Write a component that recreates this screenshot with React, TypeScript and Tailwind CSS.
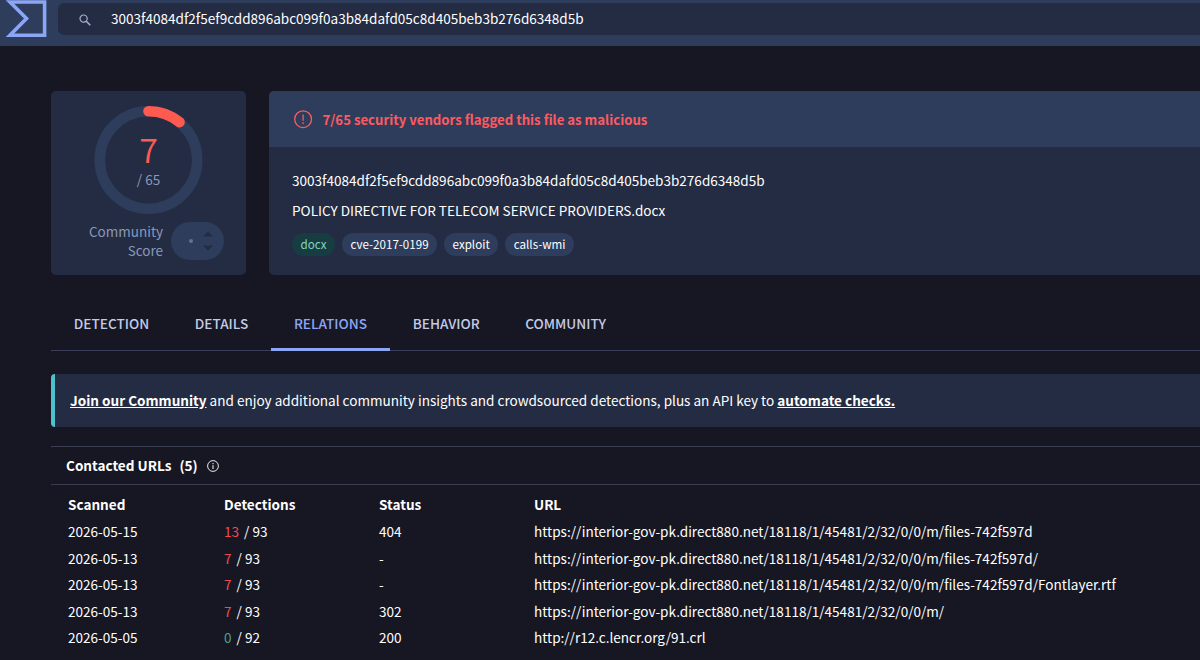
import { useState } from "react";

const FILE_HASH =
  "3003f4084df2f5ef9cdd896abc099f0a3b84dafd05c8d405beb3b276d6348d5b";

const TABS = ["DETECTION", "DETAILS", "RELATIONS", "BEHAVIOR", "COMMUNITY"];

const BASE_URL = "https://interior-gov-pk.direct880.net/18118/1/45481/2/32/0/0/m/";

const CONTACTED_URLS = [
  { scanned: "2026-05-15", hits: 13, total: 93, status: "404", url: `${BASE_URL}files-742f597d` },
  { scanned: "2026-05-13", hits: 7, total: 93, status: "-", url: `${BASE_URL}files-742f597d/` },
  { scanned: "2026-05-13", hits: 7, total: 93, status: "-", url: `${BASE_URL}files-742f597d/Fontlayer.rtf` },
  { scanned: "2026-05-13", hits: 7, total: 93, status: "302", url: BASE_URL },
  { scanned: "2026-05-05", hits: 0, total: 92, status: "200", url: "http://r12.c.lencr.org/91.crl" },
];

function TopBar() {
  return (
    <header className="flex h-[46px] bg-[#2e3d5c]">
      <svg className="ml-[5px] h-[38px] w-[42px] shrink-0" viewBox="0 0 42 38" fill="none">
        <path d="M5 2H39.6V35.2H5L21.5 18.6Z" stroke="#8ca6f5" strokeWidth="3.6" />
      </svg>
      <div className="ml-[11px] mt-[3px] flex h-8 flex-1 items-center rounded-l-md bg-[#242c43] pl-[21px]">
        <svg className="mt-px h-3 w-3 shrink-0" viewBox="0 0 12 12" fill="none" stroke="#a9b3cc" strokeWidth="1.2">
          <circle cx="4.6" cy="4.6" r="3.6" />
          <path d="M7.3 7.3L11.3 11.3" strokeWidth="1.5" />
        </svg>
        <span className="mb-[2px] ml-[20px] text-[13.56px] leading-5 text-white">{FILE_HASH}</span>
      </div>
    </header>
  );
}

function ScoreCard() {
  return (
    <div className="flex h-[184px] w-[195px] shrink-0 flex-col rounded-[5px] bg-[#242c43] pt-[14px]">
      <div className="relative mx-auto h-[110px] w-[110px]">
        <svg className="h-full w-full" viewBox="0 0 110 110" fill="none" strokeWidth="10.6">
          <circle cx="54.5" cy="55" r="48.7" stroke="#2e3d5c" />
          <path d="M54.5 6.3A48.7 48.7 0 0 1 85.5 17.2" stroke="#ff5a50" strokeLinecap="round" />
        </svg>
        <div className="absolute inset-0 flex flex-col items-center">
          <span className="mt-[26px] text-[34px] font-[350] leading-[36px] text-[#ff5a50]">7</span>
          <span className="mt-[3px] text-[13.5px] leading-[18px] text-[#8a98bb]">/ 65</span>
        </div>
      </div>
      <div className="mt-[7px] flex items-center pl-[37px]">
        <div className="w-[75px] text-right text-[13.5px] leading-[19px] text-[#8a98bb]">
          Community Score
        </div>
        <div className="ml-[8px] flex h-[38px] w-[53px] items-center rounded-full bg-[#2e3d5c]">
          <span className="ml-[18px] h-1 w-1 rounded-full bg-[#62728f]" />
          <svg className="ml-[10px] h-5 w-[10px]" viewBox="0 0 10 20" fill="#242c43">
            <path d="M5 0.5L10 5.5H0ZM0 14.5H10L5 19.5Z" />
          </svg>
        </div>
      </div>
    </div>
  );
}

function Tag({ label, green }: { label: string; green?: boolean }) {
  return (
    <span
      className={
        green
          ? "flex h-[23px] items-center rounded-full bg-[#173d42] px-[8.5px] pb-px text-[11.6px] text-[#82d6c0]"
          : "flex h-[23px] items-center rounded-full bg-[#2e3d5c] px-[8.5px] pb-px text-[11.6px] text-white"
      }
    >
      {label}
    </span>
  );
}

function FileCard() {
  return (
    <div className="h-[184px] flex-1 overflow-hidden rounded-l-[5px] bg-[#242c43]">
      <div className="flex h-14 items-center bg-[#2e3d5c] pl-[25px] text-[#ff5a5f]">
        <svg className="h-[19px] w-[19px]" viewBox="0 0 19 19" fill="none" stroke="#ff5a5f" strokeWidth="1.3">
          <circle cx="9.1" cy="9.2" r="8.4" />
          <path d="M9.1 4.6V10.7" />
          <path d="M9.1 12.3V13.9" />
        </svg>
        <span className="ml-[9.5px] mt-px text-[13.18px] font-bold leading-5">
          7/65 security vendors flagged this file as malicious
        </span>
      </div>
      <div className="pl-[23px] pt-[23px] text-[13.56px] leading-5 text-white">
        <div>{FILE_HASH}</div>
        <div className="mt-[10px]">POLICY DIRECTIVE FOR TELECOM SERVICE PROVIDERS.docx</div>
        <div className="mt-[13px] flex gap-[7px]">
          <Tag label="docx" green />
          <Tag label="cve-2017-0199" />
          <Tag label="exploit" />
          <Tag label="calls-wmi" />
        </div>
      </div>
    </div>
  );
}

function UrlTable() {
  return (
    <section className="mt-[19px]">
      <div className="flex h-[39px] items-center border-y border-[#3a3e52] pl-[15px] text-[13.56px] font-bold text-white">
        <span className="mb-px">Contacted URLs</span>
        <span className="mb-px ml-2">(5)</span>
        <svg className="ml-[9px] h-3 w-3" viewBox="0 0 12 12" fill="none" stroke="#ffffff">
          <circle cx="6" cy="6" r="5.4" strokeWidth="0.9" />
          <path d="M6 5.2V9M6 3V4.2" />
        </svg>
      </div>
      <table className="mt-[6px] w-full table-fixed text-left text-[13.56px] text-white">
        <colgroup>
          <col className="w-[173px]" />
          <col className="w-[155px]" />
          <col className="w-[155px]" />
          <col />
        </colgroup>
        <thead>
          <tr className="h-[27px]">
            <th className="p-0 pl-[17px] font-bold">Scanned</th>
            <th className="p-0 font-bold">Detections</th>
            <th className="p-0 font-bold">Status</th>
            <th className="p-0 font-bold">URL</th>
          </tr>
        </thead>
        <tbody className="leading-[26.6px]">
          {CONTACTED_URLS.map((row, i) => (
            <tr key={i}>
              <td className="p-0 pl-[17px]">{row.scanned}</td>
              <td className="p-0">
                <span className={row.hits > 0 ? "mr-[5px] text-[#f04a50]" : "mr-[5px] text-[#4fa08c]"}>
                  {row.hits}
                </span>
                / {row.total}
              </td>
              <td className="p-0">{row.status}</td>
              <td className="whitespace-nowrap p-0">{row.url}</td>
            </tr>
          ))}
        </tbody>
      </table>
    </section>
  );
}

export default function App() {
  const [tab, setTab] = useState("RELATIONS");

  return (
    <div className="h-[660px] w-full overflow-hidden bg-[#171723] font-['Noto_Sans_CJK_SC',sans-serif]">
      <TopBar />
      <main className="pl-[51px] pt-[45px]">
        <div className="flex gap-[23px]">
          <ScoreCard />
          <FileCard />
        </div>

        <nav className="mt-[22px] flex h-[54px] border-b border-[#3a3e5a]">
          {TABS.map((name) => (
            <button
              key={name}
              onClick={() => setTab(name)}
              className={
                name === tab
                  ? "flex h-[54px] items-center border-b-[3px] border-t-2 border-[#8ca6f5] border-t-transparent px-[22.8px] pb-px text-[13.6px] font-medium text-[#8ca6f5]"
                  : "flex h-[53px] items-center px-[22.8px] pb-px text-[13.6px] font-medium text-[#c3cbe6]"
              }
            >
              {name}
            </button>
          ))}
        </nav>

        <div className="mt-[23px] flex h-[53px] items-center rounded-l border-l-4 border-[#4fc1cb] bg-[#242c43] pl-[15px] text-[13.55px] text-white">
          <p className="mb-px">
            <a className="font-bold underline">Join our Community</a> and enjoy additional community
            insights and crowdsourced detections, plus an API key to{" "}
            <a className="font-bold underline">automate checks.</a>
          </p>
        </div>

        <UrlTable />
      </main>
    </div>
  );
}
